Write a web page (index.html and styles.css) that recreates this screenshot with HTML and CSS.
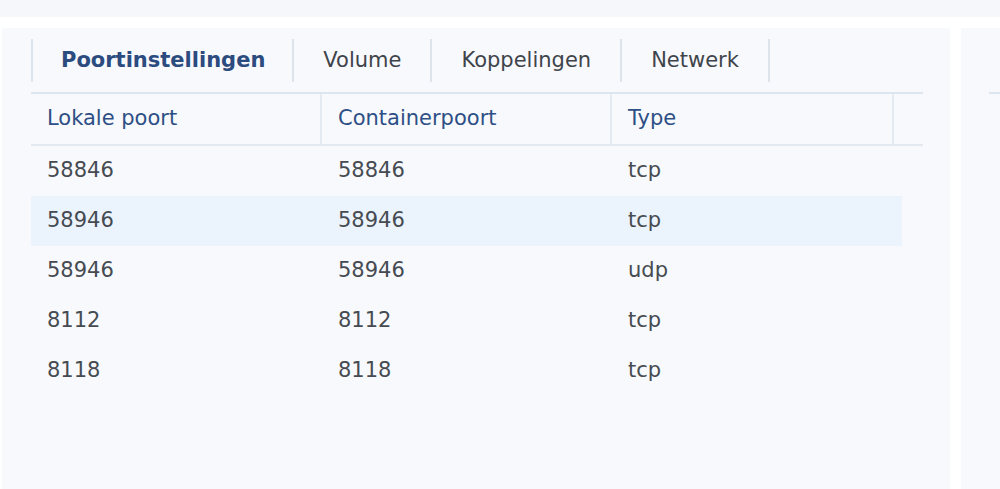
FILE: index.html
```html
<!DOCTYPE html>
<html lang="nl">

<head>
    <meta charset="UTF-8">
    <meta name="viewport" content="width=device-width, initial-scale=1.0">
    <title>Poortinstellingen</title>
    <link rel="stylesheet" href="styles.css">
</head>

<body>
    <div class="topbar"></div>

    <div class="main">
        <div class="panel">
            <div class="tabs">
                <div class="tab active">Poortinstellingen</div>
                <div class="tab">Volume</div>
                <div class="tab">Koppelingen</div>
                <div class="tab">Netwerk</div>
            </div>

            <div class="grid">
                <div class="grid-head">
                    <div class="cell">Lokale poort</div>
                    <div class="cell">Containerpoort</div>
                    <div class="cell">Type</div>
                    <div class="cell"></div>
                </div>
                <div class="row">
                    <div class="cell">58846</div>
                    <div class="cell">58846</div>
                    <div class="cell">tcp</div>
                </div>
                <div class="row selected">
                    <div class="cell">58946</div>
                    <div class="cell">58946</div>
                    <div class="cell">tcp</div>
                </div>
                <div class="row">
                    <div class="cell">58946</div>
                    <div class="cell">58946</div>
                    <div class="cell">udp</div>
                </div>
                <div class="row">
                    <div class="cell">8112</div>
                    <div class="cell">8112</div>
                    <div class="cell">tcp</div>
                </div>
                <div class="row">
                    <div class="cell">8118</div>
                    <div class="cell">8118</div>
                    <div class="cell">tcp</div>
                </div>
            </div>
        </div>

        <div class="side">
            <div class="side-line"></div>
        </div>
    </div>
</body>

</html>
```

FILE: styles.css
```css
body {
    font-family: "DejaVu Sans", Verdana, sans-serif;
    font-size: 21px;
    margin: 0;
    padding: 0;
    background-color: #fff;
    height: 489px;
    overflow: hidden;
    display: flex;
    flex-direction: column;
}

.topbar {
    height: 17px;
    background-color: #f5f7fb;
}

.main {
    flex: 1;
    display: flex;
    margin-top: 11px;
}

.panel {
    width: 948px;
    margin-left: 2px;
    padding: 11px 0 0 29px;
    box-sizing: border-box;
    background-color: #f7f9fc;
}

.side {
    flex: 1;
    margin-left: 11px;
    padding-top: 64px;
    background-color: #f7f9fc;
}

.side-line {
    margin-left: 28px;
    height: 2px;
    background-color: #dde5ee;
}

.tabs {
    display: flex;
    height: 43px;
    border-left: 2px solid #dde4ec;
}

.tab {
    display: flex;
    align-items: center;
    padding: 0 29px 2px 29px;
    border-right: 2px solid #dde4ec;
    color: #3f444b;
}

.tab.active {
    padding: 0 27px 2px 28px;
    font-weight: bold;
    color: #2c4b7f;
}

.grid {
    margin-top: 10px;
    width: 892px;
    border-top: 2px solid #dde5ee;
}

.grid-head {
    display: grid;
    grid-template-columns: 291px 290px 282px 29px;
    height: 50px;
    border-bottom: 2px solid #e3e9f0;
    color: #2e4f85;
}

.grid-head .cell {
    border-right: 2px solid #e3eaf2;
}

.grid-head .cell:last-child {
    border-right: none;
}

.row {
    display: grid;
    grid-template-columns: 291px 290px 290px;
    width: 871px;
    height: 50px;
    color: #464b52;
}

.row.selected {
    background-color: #ebf3fd;
}

.cell {
    display: flex;
    align-items: center;
    padding: 0 0 2px 16px;
    box-sizing: border-box;
}
```
